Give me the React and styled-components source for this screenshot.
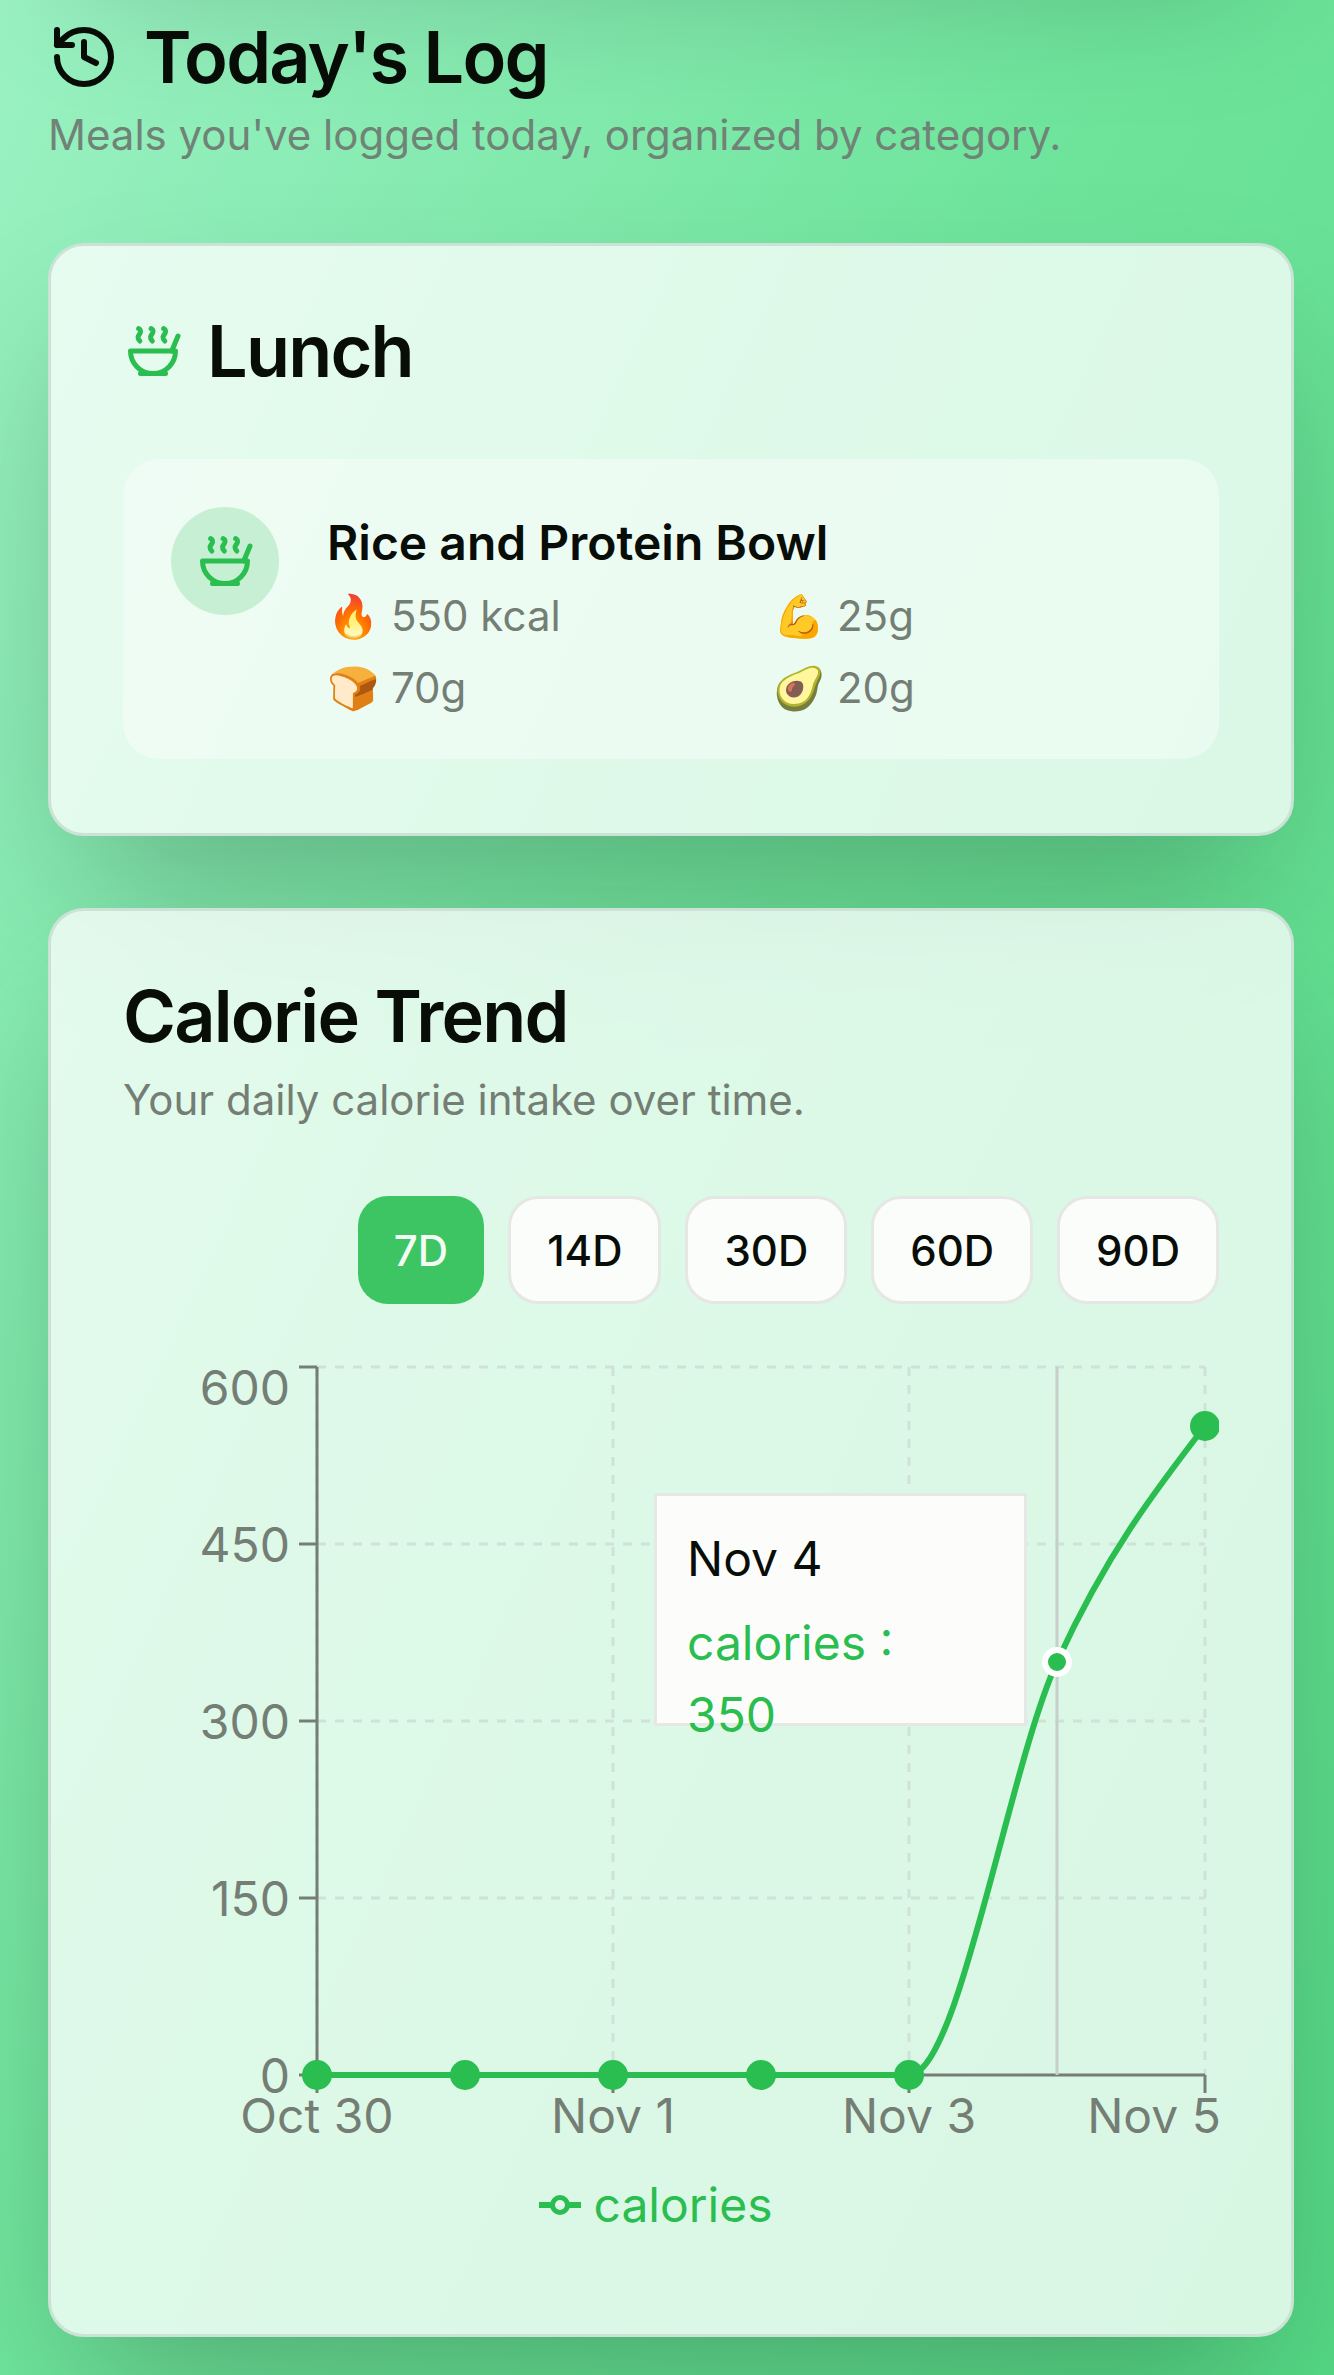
import React from "react";
import styled, { createGlobalStyle } from "styled-components";
import { History, Soup } from "lucide-react";

const GREEN = "#2abd4f";
const AXIS = "#747e74";
const GRID = "#cfe2d6";

const ranges = ["7D", "14D", "30D", "60D", "90D"];
const stats = [
  { emoji: "🔥", text: "550 kcal" },
  { emoji: "💪", text: "25g" },
  { emoji: "🍞", text: "70g" },
  { emoji: "🥑", text: "20g" },
];
const gridX = [194, 490, 786, 1082];
const gridY = [15, 192, 369, 546];
const dots = [194, 342, 490, 638, 786];
const yLabels = [
  { text: "600", y: 53 },
  { text: "450", y: 210 },
  { text: "300", y: 387 },
  { text: "150", y: 564 },
  { text: "0", y: 741 },
];
const xLabels = [
  { text: "Oct 30", x: 194 },
  { text: "Nov 1", x: 490 },
  { text: "Nov 3", x: 786 },
  { text: "Nov 5", x: 1031 },
];

function Chart() {
  return (
    <svg width="1096" height="810" viewBox="0 0 1096 810" style={{ display: "block" }}>
      <g stroke={GRID} strokeWidth="3" strokeDasharray="9 9" fill="none">
        {gridY.map((y) => (
          <line key={y} x1="194" y1={y} x2="1082" y2={y} />
        ))}
        {gridX.map((x) => (
          <line key={x} x1={x} y1="15" x2={x} y2="723" />
        ))}
      </g>
      <g stroke={AXIS} strokeWidth="3" fill="none">
        <line x1="194" y1="15" x2="194" y2="723" />
        <line x1="194" y1="723" x2="1082" y2="723" />
        {[15, 192, 369, 546, 723].map((y) => (
          <line key={y} x1="176" y1={y} x2="194" y2={y} />
        ))}
        {gridX.map((x) => (
          <line key={x} x1={x} y1="723" x2={x} y2="741" />
        ))}
      </g>
      <line x1="934" y1="15" x2="934" y2="723" stroke="#c8cec9" strokeWidth="3" />
      <g fill={AXIS} fontSize="48" fontFamily="Inter, sans-serif">
        {yLabels.map((l) => (
          <text key={l.text} x="167" y={l.y} textAnchor="end">
            {l.text}
          </text>
        ))}
        {xLabels.map((l) => (
          <text key={l.text} x={l.x} y="781" textAnchor="middle">
            {l.text}
          </text>
        ))}
      </g>
      <path
        d="M194,723 L786,723 C835.33,723 884.67,418 934,310 C983.33,202 1032.67,137.9 1082,74"
        fill="none"
        stroke={GREEN}
        strokeWidth="6"
      />
      {dots.map((x) => (
        <circle key={x} cx={x} cy="723" r="15" fill={GREEN} />
      ))}
      <circle cx="1082" cy="74" r="15" fill={GREEN} />
      <circle cx="934" cy="310" r="12" fill={GREEN} stroke="#fff" strokeWidth="6" />
    </svg>
  );
}

export default function App() {
  return (
    <Page>
      <GlobalStyle />
      <Heading>
        <History size={72} strokeWidth={2} />
        <HeadingText>Today's Log</HeadingText>
      </Heading>
      <Subtitle>Meals you've logged today, organized by category.</Subtitle>

      <Card>
        <CardHeading>
          <SoupIcon size={60} />
          <CardTitle>Lunch</CardTitle>
        </CardHeading>
        <MealRow>
          <MealBadge>
            <SoupIcon size={60} />
          </MealBadge>
          <MealBody>
            <MealName>Rice and Protein Bowl</MealName>
            <StatGrid>
              {stats.map((s) => (
                <Stat key={s.text}>
                  <span>{s.emoji}</span>
                  <span>{s.text}</span>
                </Stat>
              ))}
            </StatGrid>
          </MealBody>
        </MealRow>
      </Card>

      <TrendCard>
        <CardTitle>Calorie Trend</CardTitle>
        <CardText>Your daily calorie intake over time.</CardText>
        <RangeBar>
          {ranges.map((r) => (
            <RangeButton key={r} $active={r === "7D"}>
              {r}
            </RangeButton>
          ))}
        </RangeBar>
        <ChartWrap>
          <Chart />
          <Tooltip>
            <TooltipLabel>Nov 4</TooltipLabel>
            <TooltipValue>calories : 350</TooltipValue>
          </Tooltip>
        </ChartWrap>
        <Legend>
          <svg width="42" height="42" viewBox="0 0 42 42">
            <line x1="0" y1="21" x2="42" y2="21" stroke={GREEN} strokeWidth="6" />
            <circle cx="21" cy="21" r="7.5" fill="#e0f8e8" stroke={GREEN} strokeWidth="5" />
          </svg>
          calories
        </Legend>
      </TrendCard>
    </Page>
  );
}

const GlobalStyle = createGlobalStyle`
  html, body {
    margin: 0;
    padding: 0;
  }
  body {
    font-family: Inter, "Noto Sans", sans-serif;
    color: #080d08;
  }
`;

const Page = styled.div`
  position: relative;
  box-sizing: border-box;
  height: 2375px;
  overflow: hidden;
  padding: 21px 40px 0 48px;
  background: linear-gradient(115deg, #9af1c2 0%, #6fe49c 45%, #55d985 100%);

  &::before {
    content: "";
    position: absolute;
    top: -400px;
    left: 48px;
    right: 40px;
    height: 330px;
    box-shadow: 0 75px 150px -36px rgba(0, 0, 0, 0.25);
  }
`;

const Heading = styled.div`
  display: flex;
  align-items: center;
  gap: 24px;
  height: 72px;
`;

const HeadingText = styled.h1`
  margin: 0;
  font-size: 72px;
  line-height: 72px;
  font-weight: 600;
  letter-spacing: -1.8px;
`;

const Subtitle = styled.p`
  margin: 12px 0 0;
  font-size: 42px;
  line-height: 60px;
  color: #6f8376;
`;

const Card = styled.section`
  box-sizing: border-box;
  margin-top: 78px;
  padding: 69px 72px 72px;
  height: 593px;
  border: 3px solid #cde2d6;
  border-radius: 36px;
  background: rgba(255, 255, 255, 0.77);
  box-shadow: 0 75px 150px -36px rgba(0, 0, 0, 0.25);
`;

const TrendCard = styled(Card)`
  position: relative;
  margin-top: 72px;
  height: 1429px;
`;

const CardHeading = styled.div`
  display: flex;
  align-items: center;
  gap: 24px;
`;

const SoupIcon = styled(Soup)`
  color: ${GREEN};
  flex: none;
`;

const CardTitle = styled.h2`
  margin: 0;
  font-size: 72px;
  line-height: 72px;
  font-weight: 600;
  letter-spacing: -1.8px;
`;

const CardText = styled.p`
  margin: 18px 0 0;
  font-size: 42px;
  line-height: 60px;
  color: #747e74;
`;

const MealRow = styled.div`
  display: flex;
  gap: 48px;
  margin-top: 72px;
  padding: 48px;
  height: 300px;
  box-sizing: border-box;
  border-radius: 36px;
  background: rgba(255, 255, 255, 0.4);
`;

const MealBadge = styled.div`
  display: flex;
  align-items: center;
  justify-content: center;
  flex: none;
  width: 108px;
  height: 108px;
  border-radius: 50%;
  background: #c6efd3;
`;

const MealBody = styled.div`
  flex: 1;
`;

const MealName = styled.div`
  font-size: 48px;
  line-height: 72px;
  font-weight: 600;
`;

const StatGrid = styled.div`
  display: grid;
  grid-template-columns: 1fr 1fr;
  column-gap: 48px;
`;

const Stat = styled.div`
  display: flex;
  align-items: center;
  gap: 12px;
  height: 72px;
  font-size: 42px;
  color: #747e74;
`;

const RangeBar = styled.div`
  display: flex;
  justify-content: flex-end;
  gap: 24px;
  margin-top: 66px;
`;

const RangeButton = styled.button`
  height: 108px;
  padding: 0 36px;
  border-radius: 30px;
  border: ${(p) => (p.$active ? "none" : "3px solid #e4e7e4")};
  background: ${(p) => (p.$active ? "#3cc562" : "#fbfdfb")};
  color: ${(p) => (p.$active ? "#f4fbf5" : "#080d08")};
  font-family: inherit;
  font-size: 42px;
  font-weight: 500;
`;

const ChartWrap = styled.div`
  position: relative;
  margin-top: 48px;
`;

const Tooltip = styled.div`
  position: absolute;
  left: 531px;
  top: 141px;
  box-sizing: border-box;
  width: 373px;
  height: 233px;
  padding: 27px 30px;
  border: 3px solid #e5e8e5;
  background: #fcfdfb;
  font-size: 48px;
`;

const TooltipLabel = styled.div`
  line-height: 72px;
  color: #080d08;
`;

const TooltipValue = styled.div`
  margin-top: 12px;
  line-height: 72px;
  color: ${GREEN};
`;

const Legend = styled.div`
  display: flex;
  align-items: center;
  justify-content: center;
  gap: 12px;
  padding-right: 30px;
  margin-top: 7px;
  font-size: 48px;
  line-height: 72px;
  color: ${GREEN};
`;
